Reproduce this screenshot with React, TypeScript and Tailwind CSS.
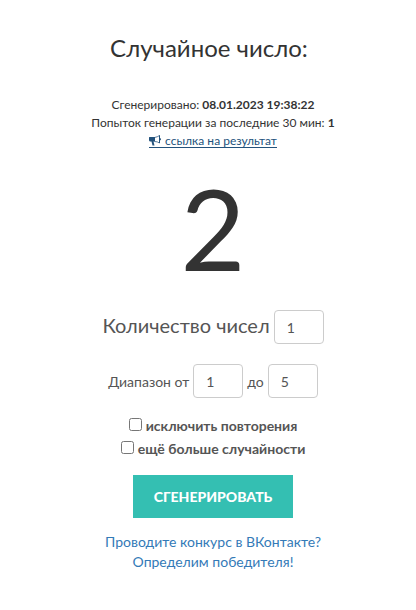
import { useState } from 'react';

interface NumberFieldProps {
  id: string;
  label: string;
  value: string;
  onChange: (value: string) => void;
  labelClass?: string;
}

function BullhornIcon() {
  return (
    <svg viewBox="0 0 24 24" className="w-3 h-3" fill="currentColor" aria-hidden="true">
      <path d="M0 5q0-1 1-1h11v9H9l2 8H7L5 13H2q-2-1-2-3z" />
      <path
        d="M11 5q6-1 10-4v15q-4-3-10-3"
        fill="none"
        stroke="currentColor"
        strokeWidth="1.500"
      />
      <path d="M20 1h2v5q2 1 2 2.500T22 11v5h-2z" />
    </svg>
  );
}

function NumberField({ id, label, value, onChange, labelClass }: NumberFieldProps) {
  return (
    <>
      <label htmlFor={id} className={labelClass}>
        {label}
      </label>
      <input
        id={id}
        type="text"
        inputMode="numeric"
        value={value}
        onChange={(e) => onChange(e.target.value)}
        className="w-[50px] h-[34px] px-3 text-sm text-[#555] bg-white border border-[#ccc] rounded focus:outline-none focus:border-[#66afe9]"
      />
    </>
  );
}

export default function App() {
  const [count, setCount] = useState('1');
  const [from, setFrom] = useState('1');
  const [to, setTo] = useState('5');
  const [unique, setUnique] = useState(false);
  const [extra, setExtra] = useState(false);

  return (
    <main className="min-h-screen bg-white text-center text-[#333] font-['Lato','Liberation_Sans',sans-serif]">
      <h1 className="pt-8 pl-0.5 text-2xl leading-8">Случайное число:</h1>

      <div className="pl-2.5">
        {/* Result details */}
        <div className="mt-8 flex flex-col items-center text-xs leading-[18px]">
          <p>
            Сгенерировано: <b>08.01.2023 19:38:22</b>
          </p>
          <p>
            Попыток генерации за последние 30 мин: <b>1</b>
          </p>
          <a href="#result" className="mt-0.5 flex items-center gap-1 h-3.5 border-b border-[#23527c] text-[#23527c]">
            <BullhornIcon />
            ссылка на результат
          </a>
        </div>

        <div className="mt-4 text-[112px] leading-[128px]">2</div>

        {/* Settings */}
        <form className="mt-[18px] text-sm text-[#555]" onSubmit={(e) => e.preventDefault()}>
          <div className="flex items-baseline justify-center gap-1">
            <NumberField id="count" label="Количество чисел" value={count} onChange={setCount} labelClass="text-xl" />
          </div>
          <div className="mt-5 flex items-baseline justify-center gap-1">
            <NumberField id="from" label="Диапазон от" value={from} onChange={setFrom} />
            <NumberField id="to" label="до" value={to} onChange={setTo} />
          </div>

          <div className="mt-[18px] flex flex-col items-center gap-[3px] font-bold leading-5">
            <label className="flex items-start gap-1">
              <input type="checkbox" checked={unique} onChange={(e) => setUnique(e.target.checked)} className="mt-0.5 w-[13px] h-[13px]" />
              исключить повторения
            </label>
            <label className="flex items-start gap-1">
              <input type="checkbox" checked={extra} onChange={(e) => setExtra(e.target.checked)} className="mt-0.5 w-[13px] h-[13px]" />
              ещё больше случайности
            </label>
          </div>

          <button type="submit" className="mt-4 w-40 h-[43px] bg-[#34bfb2] text-white text-sm font-black uppercase">
            Сгенерировать
          </button>
        </form>

        <a href="#contest" className="mt-3.5 inline-block text-sm leading-5 text-[#337ab7]">
          Проводите конкурс в ВКонтакте?
          <br />
          Определим победителя!
        </a>
      </div>
    </main>
  );
}
